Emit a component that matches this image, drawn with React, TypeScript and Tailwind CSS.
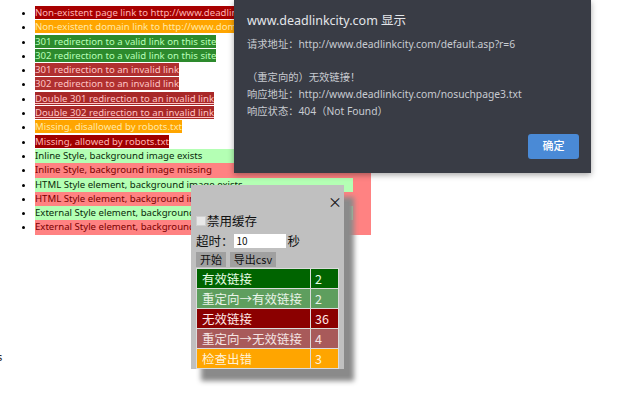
import React from 'react';

type Item = { text: string; cls: string };

const TOP_ITEMS: Item[] = [
  { text: 'Non-existent page link to http://www.deadlinkcity.com/nosuchpage.htm', cls: 'bg-[#a80000] text-[#ffb4b4]' },
  { text: 'Non-existent domain link to http://www.domain.invalid/', cls: 'bg-[#ffa500] text-[#ffe9a8]' },
  { text: '301 redirection to a valid link on this site', cls: 'bg-[#2d8a2d] text-[#b8ffb8]' },
  { text: '302 redirection to a valid link on this site', cls: 'bg-[#2d8a2d] text-[#b8ffb8]' },
  { text: '301 redirection to an invalid link', cls: 'bg-[#b03030] text-[#ffc4c4]' },
  { text: '302 redirection to an invalid link', cls: 'bg-[#b03030] text-[#ffc4c4]' },
  { text: 'Double 301 redirection to an invalid link', cls: 'bg-[#a82828] text-[#ffc4c4] underline' },
  { text: 'Double 302 redirection to an invalid link', cls: 'bg-[#a82828] text-[#ffc4c4] underline' },
  { text: 'Missing, disallowed by robots.txt', cls: 'bg-[#ffa500] text-[#ffe9a8]' },
  { text: 'Missing, allowed by robots.txt', cls: 'bg-[#a00000] text-[#ffb4b4]' },
];

const STYLE_ITEMS: Item[] = [
  { text: 'Inline Style, background image missing', cls: 'text-[#7a0000]' },
  { text: 'HTML Style element, background image exists', cls: 'bg-[#b4ffb4] text-[#0a2a0a] w-[318px]' },
  { text: 'HTML Style element, background image missing', cls: 'text-[#7a0000]' },
  { text: 'External Style element, background image exists', cls: 'bg-[#b4ffb4] text-[#0a2a0a] w-[318px]' },
  { text: 'External Style element, background image missing', cls: 'text-[#7a0000]' },
];

const RESULTS = [
  { label: '有效链接', count: 2, cls: 'bg-[#006400] text-[#e6ffe6]' },
  { label: '重定向→有效链接', count: 2, cls: 'bg-[#5e9e5e] text-[#e8f4e8]' },
  { label: '无效链接', count: 36, cls: 'bg-[#8b0000] text-[#ffe8e8]' },
  { label: '重定向→无效链接', count: 4, cls: 'bg-[#a85a5a] text-[#f4e4e4]' },
  { label: '检查出错', count: 3, cls: 'bg-[#ffa500] text-[#fff2d6]' },
];

export default function App() {
  return (
    <div className="relative w-[640px] h-[400px] overflow-hidden bg-white font-['Noto_Sans','Noto_Sans_CJK_SC',sans-serif]">
      {/* ── Page list ── */}
      <div className="pt-[6px] text-[9.6px] leading-[14.3px]">
        <ul className="list-disc pl-[35px]">
          {TOP_ITEMS.map((it) => (
            <li key={it.text} className="whitespace-nowrap h-[14.3px]">
              <span className={it.cls}>{it.text}</span>
            </li>
          ))}
          <li className="whitespace-nowrap h-[14.3px]">
            <div className="w-[318px] bg-[#b4ffb4] text-[#0a2a0a]">Inline Style, background image exists</div>
          </li>
        </ul>
        <div className="ml-[35px] w-[336px] bg-[#ff8282]">
          <ul className="list-disc">
            {STYLE_ITEMS.map((it) => (
              <li key={it.text} className="whitespace-nowrap h-[14.3px]">
                <div className={it.cls}>{it.text}</div>
              </li>
            ))}
          </ul>
        </div>
        <div className="mt-[115px] -ml-[3px] text-[11px] text-[#222]">s</div>
      </div>

      {/* ── Alert dialog ── */}
      <div className="absolute left-[234px] top-0 w-[357px] h-[173px] bg-[#393c45] shadow-[0_2px_6px_rgba(0,0,0,0.35)] flex flex-col pl-[13px] pr-[12px]">
        <div className="mt-[11px] text-[12.5px] leading-[20px] text-[#e4e6ea]">www.deadlinkcity.com 显示</div>
        <div className="mt-[5px] text-[10.3px] leading-[16.7px] text-[#c8cbd1]">
          <div>请求地址：http://www.deadlinkcity.com/default.asp?r=6</div>
          <div>&nbsp;</div>
          <div>（重定向的）无效链接！</div>
          <div>响应地址：http://www.deadlinkcity.com/nosuchpage3.txt</div>
          <div>响应状态：404（Not Found）</div>
        </div>
        <div className="mt-auto mb-[14px] flex justify-end">
          <button className="w-[51px] h-[25px] rounded-[3px] bg-[#4a8ad6] text-[11px] font-medium text-white">确定</button>
        </div>
      </div>

      {/* ── Checker panel ── */}
      <div className="absolute left-[191px] top-[185px] w-[153px] h-[184px] bg-[#c0c0c0] shadow-[10px_12px_5px_#8a8a8a] font-['Noto_Sans_CJK_SC',sans-serif] text-[#111] px-[5px]">
        <div className="flex justify-end h-[24px] items-end -mr-[3px] text-[14px] leading-[16px]">×</div>
        <div className="flex items-center h-[22px] pt-[2px] text-[12.5px]">
          <span className="w-[10px] h-[10px] bg-[#e8e8e8] border border-[#d0d0d0] mr-[1px]" />
          <span>禁用缓存</span>
        </div>
        <div className="flex items-center h-[20px] text-[12.5px]">
          <span>超时：</span>
          <span className="w-[52px] h-[14px] bg-white text-[10px] leading-[14px] pl-[3px]">10</span>
          <span className="ml-[2px]">秒</span>
        </div>
        <div className="flex gap-[4px] mt-[1px] text-[11px] leading-[15px]">
          <button className="w-[30px] h-[15px] bg-[#a0a0a0]">开始</button>
          <button className="w-[46px] h-[15px] bg-[#a0a0a0]">导出csv</button>
        </div>
        <div className="mt-[1px] flex flex-col gap-[1px] bg-[#dcdcdc] p-[1px] w-[143px] text-[12.5px] leading-[19px]">
          {RESULTS.map((r) => (
            <div key={r.label} className="flex gap-[1px]">
              <div className={`w-[113px] pl-[5px] ${r.cls}`}>{r.label}</div>
              <div className={`flex-1 pl-[4px] ${r.cls}`}>{r.count}</div>
            </div>
          ))}
        </div>
      </div>
    </div>
  );
}
